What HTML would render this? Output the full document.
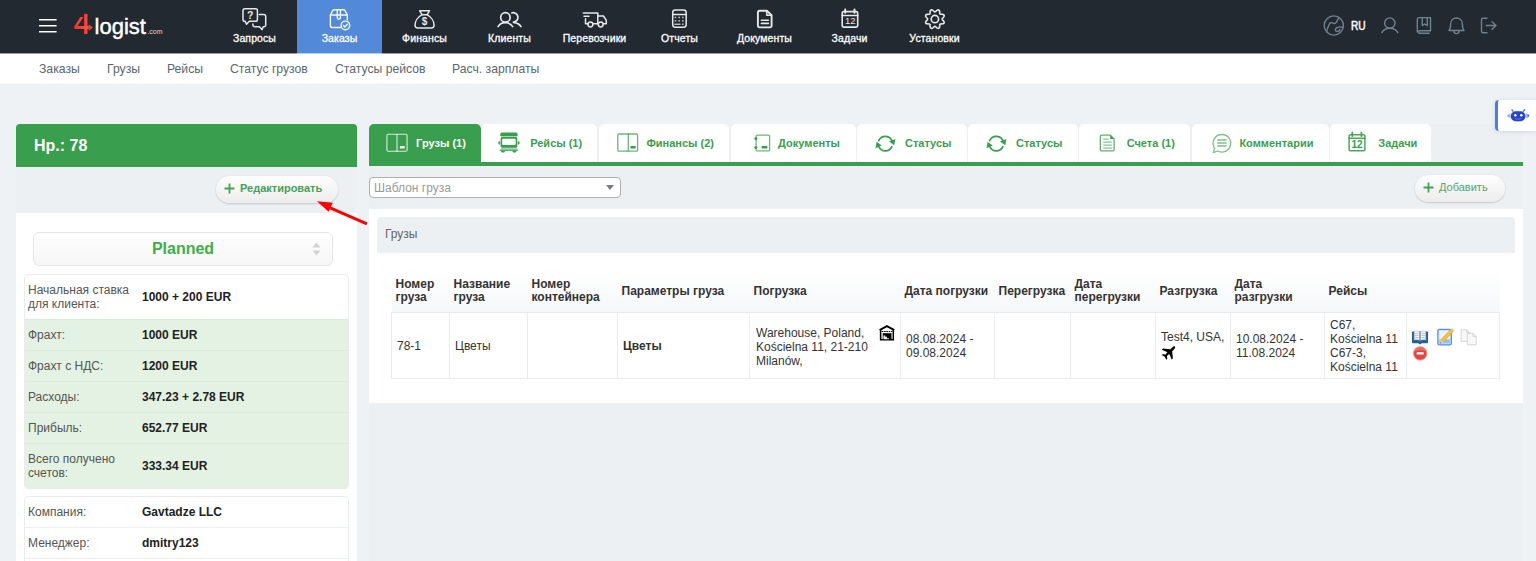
<!DOCTYPE html>
<html lang="ru">
<head>
<meta charset="utf-8">
<title>4logist</title>
<style>
*{box-sizing:border-box;margin:0;padding:0}
html,body{width:1536px;height:561px;overflow:hidden}
body{background:#eef2f5;font-family:"Liberation Sans",sans-serif;font-size:12px;color:#333;position:relative}
.abs{position:absolute}
/* top bar */
#topbar{position:absolute;left:0;top:0;width:1536px;height:53px;background:#232930;box-shadow:0 1px 0 rgba(35,41,48,.45);z-index:2}
#burger{position:absolute;left:38.600px;top:18px;width:18px;height:14.800px;overflow:visible}
#logo{position:absolute;left:74px;top:12px;height:30px;color:#fff;white-space:nowrap}
#logo .l{position:absolute;left:20.600px;top:1.800px;font-size:22px;line-height:26px;-webkit-text-stroke:.45px #fff}
#logo .c{position:absolute;left:73.400px;top:15.800px;font-size:7px;line-height:8px;color:#d8dbdf}
.nav{position:absolute;top:0;left:212px;height:53px;display:flex}
.nav a{display:block;width:85px;height:53px;position:relative;color:#fff;text-decoration:none;text-align:center;font-size:10.500px;letter-spacing:.1px;-webkit-text-stroke:.3px #fff}
.nav a.act{background:#5289d9;box-shadow:0 1px 0 #b4cbee}
.nav a.act svg{stroke:rgba(255,255,255,.92);stroke-width:1.400}
.nav a svg{position:absolute;left:0;top:0;width:85px;height:53px;fill:none;stroke:#e6e8ea;stroke-width:1.500;stroke-linecap:round;stroke-linejoin:round}
.nav a span{position:absolute;left:0;right:0;top:32px;line-height:13px}
.tools{position:absolute;top:0;left:1316px;width:200px;height:53px}
.tools svg{position:absolute;left:0;top:0;width:200px;height:53px;fill:none;stroke:#6e8291;stroke-width:1.400;stroke-linecap:round;stroke-linejoin:round}
.tools b{position:absolute;left:34.500px;top:20px;font-size:12px;line-height:13px;color:#fff;font-weight:normal;-webkit-text-stroke:.45px #fff;display:inline-block;transform:scaleX(.85);transform-origin:0 0}
/* subnav */
#subnav{position:absolute;left:0;top:53px;width:1536px;height:30px;background:#fff;box-shadow:0 1px 0 rgba(255,255,255,.5)}
#subnav a{position:absolute;top:1px;line-height:30px;font-size:12.200px;color:#5b6770;text-decoration:none;white-space:nowrap}
/* robot */
#robot{z-index:3;position:absolute;left:1495px;top:100px;width:41px;height:31px;background:#fff;border-left:3px solid #4a80d4;border-radius:4px 0 0 4px;box-shadow:0 1px 4px rgba(120,140,160,.25)}
#robot svg{position:absolute;left:0;top:0;width:38px;height:31px}
/* left panel */
#lhead{position:absolute;left:16px;top:124px;width:341px;height:43px;background:#399e4d;border-radius:4px 4px 0 0;color:#fff;font-weight:bold;font-size:16px;line-height:43px;padding-left:18px}
.pill{position:absolute;height:27px;border-radius:14px;background:linear-gradient(#fefefe,#ececec);box-shadow:0 1px 2px rgba(0,0,0,.16),0 0 1px rgba(0,0,0,.10);color:#45a157;font-size:11px;line-height:24px;white-space:nowrap}
#lwhite{position:absolute;left:16px;top:213px;width:341px;height:348px;background:#fff}
#status{position:absolute;left:17px;top:19px;width:300px;height:34px;border:1px solid #e4e6e8;border-radius:6px;background:linear-gradient(#fff,#f6f6f6);text-align:center;color:#3cb047;font-weight:bold;font-size:16px;line-height:32px}
.box{position:absolute;left:8px;width:325px;border:1px solid #e9ecee;border-radius:4px;overflow:hidden;background:#fff}
.row{display:flex;align-items:center;border-top:1px solid #eceff1;padding-left:3px;font-size:12px;line-height:14px}
.row:first-child{border-top:0}
.row.g{background:#e3f2e3;border-top-color:#d9ebd9}
.row .k{width:114px;color:#555}
.row .v{font-weight:bold;color:#222}
/* right panel */
.tab{position:absolute;top:124px;height:38px;background:#fff;border-radius:5px 5px 0 0;color:#399e4d;font-weight:bold;font-size:11px;line-height:38px;white-space:nowrap}
.tab.act{background:#399e4d;color:#fff}
.tab svg{position:absolute;left:0;top:0;width:100%;height:38px;fill:none;stroke:#399e4d;stroke-width:1.200;stroke-linejoin:round;stroke-linecap:round}
.tab.act svg{stroke:#fff}
.tab span{position:absolute;top:0}
#tline{position:absolute;left:369px;top:162px;width:1154px;height:4px;background:#399e4d}
#tsel{position:absolute;left:369px;top:177px;width:252px;height:21px;background:#fff;border:1px solid #afafaf;border-radius:4px;font-size:12px;line-height:19px;color:#999;padding:1px 0 0 4px}
#tsel i{position:absolute;right:6px;top:7px;border:4px solid transparent;border-top:5px solid #7a7a7a;border-bottom:0}
#rwhite{position:absolute;left:369px;top:209px;width:1154px;height:194px;background:#fff}
#rhead{position:absolute;left:8px;top:8px;width:1138px;height:36px;background:#ecf0f3;border-radius:4px 4px 0 0;font-size:12px;line-height:35px;color:#666;padding-left:8px}
#ticons{position:absolute;left:0;top:0;width:1154px;height:194px;pointer-events:none}
table{position:absolute;left:22px;top:56px;border-collapse:collapse;table-layout:fixed;width:1108px;font-size:12px}
th{height:47px;text-align:left;font-weight:bold;color:#333;line-height:13px;padding:6px 4px 0 4px;vertical-align:middle;background:linear-gradient(#fff 15%,#f5f7f9)}
td{height:66px;border:1px solid #e9ecef;color:#333;line-height:14px;padding:2px 4px 0 5px;vertical-align:middle}
</style>
</head>
<body>
<!-- TOPBAR -->
<div id="topbar">
  <svg id="burger" viewBox="0 0 18 14"><path d="M0 1.400h17.600M0 7.400h17.600M0 13.400h17.600" stroke="#fff" stroke-width="1.400" fill="none"/></svg>
  <div id="logo">
    <svg class="abs" style="left:0;top:0" width="20" height="24" viewBox="74 12 20 24"><defs><linearGradient id="lg4" x1="0" x2="1" y1="0" y2="0"><stop offset="0" stop-color="#e8332b"/><stop offset="1" stop-color="#fb554b"/></linearGradient></defs><g fill="url(#lg4)"><rect x="84" y="13.900" width="3.400" height="20.100"/><path d="M80.400 17.100H83.500L77.700 25.900H88.800V29.100H74.300V26.300Z"/><path d="M88.600 24.200l4.200 3.300-4.200 3.600z"/></g></svg>
    <span class="l">logist</span><span class="c">.com</span>
  </div>
  <div class="nav">
    <a><svg viewBox="212 0 85 53"><path d="M244.800 8.700h10.800a1.800 1.800 0 0 1 1.800 1.800v8.900a1.800 1.800 0 0 1-1.800 1.800h-6.300l-2.800 3-1.500-3h-0.200a1.800 1.800 0 0 1-1.800-1.800v-8.900a1.800 1.800 0 0 1 1.800-1.800z"/><path d="M259.200 14.600h4.700a1.800 1.800 0 0 1 1.800 1.800v8.500a1.800 1.800 0 0 1-1.800 1.800h-0.700l-1.200 2.900-2.600-2.900h-4.700a1.800 1.800 0 0 1-1.800-1.800v-0.900"/><text x="250.200" y="19.100" font-size="10.500" font-weight="bold" fill="#e6e8ea" stroke="none" text-anchor="middle" font-family="Liberation Sans, sans-serif">?</text></svg><span>Запросы</span></a>
    <a class="act"><svg viewBox="297 0 85 53"><path d="M330.400 15v10.700a1.800 1.800 0 0 0 1.800 1.800h8.300"/><path d="M347.300 19.800v-4.800"/><path d="M330.400 15l2.300-4.300a1.800 1.800 0 0 1 1.500-.9h9.300a1.800 1.800 0 0 1 1.500.9l2.300 4.300z"/><path d="M337.300 9.800v8a1.300 1.300 0 0 0 1.300 1.300h.5a1.300 1.300 0 0 0 1.300-1.300v-8"/><circle cx="345.400" cy="25.400" r="4.300"/><path d="M343.500 25.500l1.400 1.400 2.600-2.600"/></svg><span>Заказы</span></a>
    <a><svg viewBox="382 0 85 53"><path d="M419.700 10.800h9.800l-2.400 3.900h-5z"/><path d="M422.100 14.700c-4.200 2.300-7.100 6.800-7.100 10.600 0 1.700 1 2.700 2.900 2.700h13.300c1.900 0 2.900-1 2.900-2.700 0-3.800-2.900-8.300-7.100-10.600"/><text x="424.600" y="25.300" font-size="10" font-weight="bold" fill="#e6e8ea" stroke="none" text-anchor="middle" font-family="Liberation Sans, sans-serif">$</text></svg><span>Финансы</span></a>
    <a><svg viewBox="467 0 85 53"><g style="stroke-width:1.700"><circle cx="505.400" cy="17.400" r="4.700"/><path d="M498.100 26.600c1.500-2.500 4.200-3.900 7.300-3.900s5.800 1.400 7.300 3.900"/><path d="M511.900 12.900a4.700 4.700 0 1 1 1.500 9.200"/><path d="M514 22.600c3 .2 5.500 1.600 7 4"/></g></svg><span>Клиенты</span></a>
    <a><svg viewBox="552 0 85 53"><path d="M583.300 13h14.500v10.700"/><path d="M584 16.300h5"/><path d="M585.500 18.700v5h2.300"/><path d="M593 23.700h5"/><path d="M597.800 16h5.700l2.800 4.400v3.300h-3"/><circle cx="590.400" cy="24.500" r="2.400"/><circle cx="600.700" cy="24.500" r="2.400"/></svg><span>Перевозчики</span></a>
    <a><svg viewBox="637 0 85 53"><rect x="672.700" y="10" width="13.500" height="17.200" rx="2.600"/><path d="M672.700 14.400h13.500"/><g fill="#c9cdd1" stroke="none"><rect x="674.700" y="16.700" width="1.500" height="1.500"/><rect x="678.400" y="16.700" width="1.500" height="1.500"/><rect x="682.100" y="16.700" width="1.500" height="1.500"/><rect x="674.700" y="20.100" width="1.500" height="1.500"/><rect x="678.400" y="20.100" width="1.500" height="1.500"/><rect x="682.100" y="20.100" width="1.500" height="1.500"/><rect x="674.300" y="23.600" width="6.200" height="1.300"/><rect x="682.100" y="23.500" width="1.500" height="1.500"/></g></svg><span>Отчеты</span></a>
    <a><svg viewBox="722 0 85 53"><g style="stroke-width:1.900"><path d="M759.600 10.800h7.300l4.700 4.400v10.500a1.700 1.700 0 0 1-1.700 1.700h-10.300a1.700 1.700 0 0 1-1.700-1.700v-13.200a1.700 1.700 0 0 1 1.700-1.700z"/><path d="M766.700 11v4.300h4.600" style="stroke-width:1.500"/><path d="M761.400 20.200h7M761.400 23.400h7" style="stroke-width:1.600"/></g></svg><span>Документы</span></a>
    <a><svg viewBox="807 0 85 53"><g style="stroke-width:1.600"><rect x="842.200" y="11.600" width="15.500" height="15.500" rx="1.500"/><path d="M842.200 15.500h15.500"/><path d="M845.200 9.400v3.400M854.500 9.400v3.400" style="stroke-width:2"/></g><text x="850.300" y="24.300" font-size="9.500" fill="#e6e8ea" stroke="none" text-anchor="middle" font-family="Liberation Sans, sans-serif">12</text></svg><span>Задачи</span></a>
    <a><svg viewBox="892 0 85 53"><g style="stroke-width:1.600"><path d="M942.15 19.10 L942.21 19.39 L942.38 19.69 L942.65 20.02 L942.98 20.38 L943.33 20.78 L943.67 21.21 L943.94 21.65 L944.12 22.10 L944.17 22.52 L944.09 22.91 L943.88 23.24 L943.54 23.50 L943.10 23.69 L942.59 23.81 L942.05 23.88 L941.52 23.91 L941.03 23.93 L940.61 23.98 L940.27 24.07 L940.03 24.23 L939.87 24.47 L939.78 24.81 L939.73 25.23 L939.71 25.72 L939.68 26.25 L939.61 26.79 L939.49 27.30 L939.30 27.74 L939.04 28.08 L938.71 28.29 L938.32 28.37 L937.90 28.32 L937.45 28.14 L937.01 27.87 L936.58 27.53 L936.18 27.18 L935.82 26.85 L935.49 26.58 L935.19 26.41 L934.90 26.35 L934.61 26.41 L934.31 26.58 L933.98 26.85 L933.62 27.18 L933.22 27.53 L932.79 27.87 L932.35 28.14 L931.90 28.32 L931.48 28.37 L931.09 28.29 L930.76 28.08 L930.50 27.74 L930.31 27.30 L930.19 26.79 L930.12 26.25 L930.09 25.72 L930.07 25.23 L930.02 24.81 L929.93 24.47 L929.77 24.23 L929.53 24.07 L929.19 23.98 L928.77 23.93 L928.28 23.91 L927.75 23.88 L927.21 23.81 L926.70 23.69 L926.26 23.50 L925.92 23.24 L925.71 22.91 L925.63 22.52 L925.68 22.10 L925.86 21.65 L926.13 21.21 L926.47 20.78 L926.82 20.38 L927.15 20.02 L927.42 19.69 L927.59 19.39 L927.65 19.10 L927.59 18.81 L927.42 18.51 L927.15 18.18 L926.82 17.82 L926.47 17.42 L926.13 16.99 L925.86 16.55 L925.68 16.10 L925.63 15.68 L925.71 15.29 L925.92 14.96 L926.26 14.70 L926.70 14.51 L927.21 14.39 L927.75 14.32 L928.28 14.29 L928.77 14.27 L929.19 14.22 L929.53 14.13 L929.77 13.97 L929.93 13.73 L930.02 13.39 L930.07 12.97 L930.09 12.48 L930.12 11.95 L930.19 11.41 L930.31 10.90 L930.50 10.46 L930.76 10.12 L931.09 9.91 L931.48 9.83 L931.90 9.88 L932.35 10.06 L932.79 10.33 L933.22 10.67 L933.62 11.02 L933.98 11.35 L934.31 11.62 L934.61 11.79 L934.90 11.85 L935.19 11.79 L935.49 11.62 L935.82 11.35 L936.18 11.02 L936.58 10.67 L937.01 10.33 L937.45 10.06 L937.90 9.88 L938.32 9.83 L938.71 9.91 L939.04 10.12 L939.30 10.46 L939.49 10.90 L939.61 11.41 L939.68 11.95 L939.71 12.48 L939.73 12.97 L939.78 13.39 L939.87 13.73 L940.03 13.97 L940.27 14.13 L940.61 14.22 L941.03 14.27 L941.52 14.29 L942.05 14.32 L942.59 14.39 L943.10 14.51 L943.54 14.70 L943.88 14.96 L944.09 15.29 L944.17 15.68 L944.12 16.10 L943.94 16.55 L943.67 16.99 L943.33 17.42 L942.98 17.82 L942.65 18.18 L942.38 18.51 L942.21 18.81Z"/><circle cx="934.900" cy="19.100" r="3.700"/></g></svg><span>Установки</span></a>
  </div>
  <div class="tools">
    <svg viewBox="1316 0 200 53"><circle cx="1333.800" cy="25.500" r="9.600"/><path d="M1326.800 31.500c.3-2.500 .8-4 1.600-5.200s.6-2.600 1.800-3.400 2.600.3 4 .6 1.700-.6 2.400-1.700.8-2.400 2.300-3.800"/><path d="M1343 27.600c-1.700-.8-4.500-.8-6.400.3s-1.700 3.300.3 3.500 3.400-.8 2.800-2"/>
    <circle cx="1389.800" cy="23.100" r="5.200"/><path d="M1381.800 32.700c1.500-2.800 4.500-4.400 8-4.400s6.500 1.600 8 4.400"/>
    <path d="M1430.500 30.800h-11.400a1.800 1.800 0 0 0 0 2.500h10.100"/><path d="M1417.300 32v-12.600a1.800 1.800 0 0 1 1.800-1.800h11.400v13.200"/><path d="M1422.200 17.600v8l2.550-1.600 2.550 1.600v-8"/>
    <path d="M1449 30.500c1.400-1.500 1.600-3.500 1.600-6.300 0-3.600 2.500-6.200 5.900-6.200s5.900 2.600 5.900 6.200c0 2.800.2 4.800 1.600 6.300z"/><path d="M1453.900 31a2.600 2.600 0 0 0 5.200 0"/>
    <path d="M1487 18.300h-4a1.500 1.500 0 0 0-1.500 1.500v11.400a1.500 1.500 0 0 0 1.500 1.500h4"/><path d="M1486.300 25.500h9.700M1492 21.800l4 3.700-4 3.700"/></svg>
    <b>RU</b>
  </div>
</div>
<!-- SUBNAV -->
<div id="subnav">
  <a style="left:39px">Заказы</a><a style="left:107px">Грузы</a><a style="left:167px">Рейсы</a><a style="left:230px">Статус грузов</a><a style="left:335px">Статусы рейсов</a><a style="left:452px">Расч. зарплаты</a>
</div>
<div id="robot"><svg viewBox="1498 100 38 31"><path d="M1512 109.900l1.600 2.200M1524.600 109.700l-1.700 2.400" stroke="#4a6ad8" stroke-width="1.400" fill="none" stroke-linecap="round"/><path d="M1510.600 113.200l-3.300 1.700v1.800l3.300 1.500z" fill="#a3b6ee"/><path d="M1525.700 113.200c2.400.2 3.400 1.200 3.400 2.500s-1 2.300-3.400 2.500z" fill="#a3b6ee"/><circle cx="1528.400" cy="115.700" r=".9" fill="#3d5fd6"/><rect x="1510.200" y="110.700" width="15.800" height="11.200" rx="5.600" fill="#dfe8fb"/><rect x="1510.800" y="111.200" width="14.600" height="10.100" rx="5" fill="#2746c4"/><circle cx="1515.300" cy="115.300" r="1.250" fill="#fff"/><circle cx="1521.300" cy="115.300" r="1.250" fill="#fff"/><path d="M1515.200 118.400c1.800 1 4 1 5.800 0" stroke="#6f8be6" stroke-width=".8" fill="none"/></svg></div>

<!-- LEFT PANEL -->
<div class="abs" style="left:16px;top:167px;width:341px;height:46px;background:#ecf0f3"></div>
<div class="abs" style="left:369px;top:124px;width:1154px;height:437px;background:#ecf0f3"></div>
<div id="lhead">Нр.: 78</div>
<div class="pill" style="left:216px;top:176px;width:122px;font-weight:bold;padding-left:24px">
  <svg class="abs" style="left:8px;top:7px" width="11" height="11" viewBox="0 0 11 11"><path d="M5.500 0.500v10M0.500 5.500h10" stroke="#45a157" stroke-width="1.800" fill="none"/></svg>Редактировать</div>
<svg class="abs" style="left:310px;top:195px;z-index:5" width="62" height="34" viewBox="310 195 62 34"><path d="M329 207.400L366.900 223.800" stroke="#ff0000" stroke-width="2.900" fill="none"/><path d="M316.900 201.300L332.800 202.800L328.600 211.800Z" fill="#ff0000"/></svg>
<div id="lwhite">
  <div id="status">Planned<svg class="abs" style="right:11px;top:9px" width="9" height="14" viewBox="0 0 9 14"><path d="M4.500 0.500l4 5h-8zM4.500 13.500l4-5h-8z" fill="#d2d2d2"/></svg></div>
  <div class="box" style="top:61px">
    <div class="row" style="height:44px"><span class="k">Начальная ставка для клиента:</span><span class="v">1000 + 200 EUR</span></div>
    <div class="row g" style="height:31px"><span class="k">Фрахт:</span><span class="v">1000 EUR</span></div>
    <div class="row g" style="height:31px"><span class="k">Фрахт с НДС:</span><span class="v">1200 EUR</span></div>
    <div class="row g" style="height:31px"><span class="k">Расходы:</span><span class="v">347.23 + 2.78 EUR</span></div>
    <div class="row g" style="height:31px"><span class="k">Прибыль:</span><span class="v">652.77 EUR</span></div>
    <div class="row g" style="height:45px"><span class="k">Всего получено счетов:</span><span class="v">333.34 EUR</span></div>
  </div>
  <div class="box" style="top:283px;height:80px;border-radius:4px 4px 0 0">
    <div class="row" style="height:30px"><span class="k">Компания:</span><span class="v">Gavtadze LLC</span></div>
    <div class="row" style="height:31px"><span class="k">Менеджер:</span><span class="v">dmitry123</span></div>
    <div class="row" style="height:31px"><span class="k"></span><span class="v"></span></div>
  </div>
</div>

<!-- RIGHT PANEL -->
<div class="tab act" style="left:369px;width:112px"><svg viewBox="369 124 112 38"><g style="stroke-width:1.100;stroke-opacity:.8"><rect x="386.900" y="134.200" width="20.200" height="17" rx="1.200"/><path d="M397 134.200v17"/></g><rect x="399.900" y="146.100" width="4.800" height="2.400" fill="#fff" stroke="none"/></svg><span style="left:47.1px">Грузы (1)</span></div>
<div class="tab" style="left:481px;width:116px"><svg viewBox="481 124 116 38"><g fill="#399e4d" stroke="none"><path d="M500.300 136.300v-2.400a1.500 1.500 0 0 1 1.500-1.500h14.300a1.500 1.500 0 0 1 1.500 1.500v2.400z"/><path d="M502.300 136.800h13.300a1.700 1.700 0 0 1 1.700 1.700v7.600a1.700 1.700 0 0 1-1.700 1.700h-13.300a1.700 1.700 0 0 1-1.700-1.700v-7.600a1.700 1.700 0 0 1 1.700-1.700zM503.200 138.800a1 1 0 0 0-1 1v4.100a1 1 0 0 0 1 1h11.500a1 1 0 0 0 1-1v-4.100a1 1 0 0 0-1-1z" fill-rule="evenodd"/><path d="M498.400 141.600h1.700v3h-.7a1 1 0 0 1-1-1zM517.800 141.600h1.700v2a1 1 0 0 1-1 1h-.7z"/><rect x="500.800" y="147.800" width="16.300" height="1.800" fill-opacity=".45"/><rect x="499.600" y="149.600" width="18.400" height="1.200"/><path d="M500.600 150.700h4.800l-1.200 1.900h-2.400zM512 150.700h4.800l-1.200 1.900h-2.400z"/></g></svg><span style="left:49.2px">Рейсы (1)</span></div>
<div class="tab" style="left:599px;width:130px"><svg viewBox="599 124 130 38"><g style="stroke-width:1.300;stroke-opacity:.75"><rect x="617.800" y="134" width="19.800" height="17.100" rx="1.200"/><path d="M628.300 134v17.100"/></g><rect x="630.500" y="146.100" width="5.200" height="2.400" rx=".5" fill="#399e4d" stroke="none"/></svg><span style="left:47.4px">Финансы (2)</span></div>
<div class="tab" style="left:731px;width:125px"><svg viewBox="731 124 125 38"><g style="stroke-width:1.300;stroke-opacity:.75"><rect x="756.100" y="135.100" width="13.500" height="15.800" rx="1.200"/></g><circle cx="755.800" cy="138.500" r="1.500" fill="#399e4d" stroke="none"/><circle cx="755.800" cy="147.500" r="1.500" fill="#399e4d" stroke="none"/><rect x="761.600" y="146.100" width="5.800" height="2.400" rx=".5" fill="#399e4d" stroke="none"/></svg><span style="left:47.1px">Документы</span></div>
<div class="tab" style="left:857px;width:110px"><svg viewBox="857 124 110 38"><g style="stroke-width:1.700"><path d="M878.7 140.6 A7.200 7.200 0 0 1 892.2 141.6"/><path d="M891.9 146.6 A7.200 7.200 0 0 1 878.9 146.8"/></g><path d="M889.0 141.6 L895.4 139.0 L894.2 145.2 Z" fill="#399e4d" stroke="none"/><path d="M876.6 141.8 L881.7 145.4 L875.5 148.3 Z" fill="#399e4d" stroke="none"/></svg><span style="left:48.0px">Статусы</span></div>
<div class="tab" style="left:968px;width:110px"><svg viewBox="968 124 110 38"><g style="stroke-width:1.700"><path d="M989.7 140.6 A7.200 7.200 0 0 1 1003.2 141.6"/><path d="M1002.9 146.6 A7.200 7.200 0 0 1 989.9 146.8"/></g><path d="M1000.0 141.6 L1006.4 139.0 L1005.2 145.2 Z" fill="#399e4d" stroke="none"/><path d="M987.6 141.8 L992.7 145.4 L986.5 148.3 Z" fill="#399e4d" stroke="none"/></svg><span style="left:48.0px">Статусы</span></div>
<div class="tab" style="left:1079px;width:111px"><svg viewBox="1079 124 111 38"><g style="stroke-width:1.300;stroke-opacity:.8"><path d="M1101.500 135.100h8.900l3.700 3.800v10.800a1.200 1.200 0 0 1-1.200 1.200h-11.400a1.200 1.200 0 0 1-1.200-1.200v-13.400a1.200 1.200 0 0 1 1.200-1.200z"/></g><path d="M1110.200 135v4.100h4z" fill="#399e4d" stroke="none"/><g style="stroke-width:1.300;stroke-opacity:.6;stroke-linecap:butt"><path d="M1103.200 139.200h5.400M1103.200 142.100h8.600M1103.200 145.100h8.600M1103.200 148.100h8.600"/></g></svg><span style="left:47.7px">Счета (1)</span></div>
<div class="tab" style="left:1192px;width:137px"><svg viewBox="1192 124 137 38"><g style="stroke-width:1.300;stroke-opacity:.65"><path d="M1222 134.500a8.800 8.800 0 1 1-4.300 16.500l-4.500 1.600 1.500-4.300a8.800 8.800 0 0 1 7.300-13.800z"/></g><g style="stroke-width:1.500;stroke-opacity:.65;stroke-linecap:butt"><path d="M1217.200 139.900h9.400M1217.200 143h9.400M1217.200 146.100h9.400"/></g></svg><span style="left:47.4px">Комментарии</span></div>
<div class="tab" style="left:1330px;width:101px"><svg viewBox="1330 124 101 38"><g style="stroke-width:1.500;stroke-opacity:.9"><rect x="1349.100" y="134.800" width="15.800" height="16" rx="1.300"/><path d="M1349.100 138.300h15.800"/><path d="M1352.300 132.400v3.800M1361.400 132.400v3.800" style="stroke-width:1.800"/></g><text x="1357.100" y="148.100" font-size="10" fill="#399e4d" stroke="none" text-anchor="middle" font-family="Liberation Sans, sans-serif">12</text></svg><span style="left:48.3px">Задачи</span></div>
<div id="tline"></div>
<div id="tsel">Шаблон груза<i></i></div>
<div class="pill" style="left:1415px;top:175px;width:90px;padding-left:24px;font-size:11px;color:#55a565">
  <svg class="abs" style="left:8px;top:7px" width="11" height="11" viewBox="0 0 11 11"><path d="M5.500 0.500v10M0.500 5.500h10" stroke="#45a157" stroke-width="1.800" fill="none"/></svg>Добавить</div>
<div id="rwhite">
  <div id="rhead">Грузы</div>
  <table>
    <colgroup><col style="width:58px"><col style="width:78px"><col style="width:90px"><col style="width:132px"><col style="width:151px"><col style="width:94px"><col style="width:76px"><col style="width:85px"><col style="width:75px"><col style="width:94px"><col style="width:82px"><col style="width:93px"></colgroup>
    <tr><th>Номер груза</th><th>Название груза</th><th>Номер контейнера</th><th>Параметры груза</th><th>Погрузка</th><th>Дата погрузки</th><th>Перегрузка</th><th>Дата перегрузки</th><th>Разгрузка</th><th>Дата разгрузки</th><th>Рейсы</th><th></th></tr>
    <tr><td>78-1</td><td>Цветы</td><td></td><td><b>Цветы</b></td><td style="padding:4px 22px 0 6px">Warehouse, Poland, Kościelna 11, 21-210 Milanów,</td><td>08.08.2024 - 09.08.2024</td><td></td><td></td><td style="padding-top:0;padding-bottom:2px">Test4, USA,<br>&nbsp;</td><td>10.08.2024 - 11.08.2024</td><td>C67, Kościelna 11 C67-3, Kościelna 11</td><td></td></tr>
  </table>
  <svg id="ticons" viewBox="369 209 1154 194">
    <!-- warehouse -->
    <g fill="none" stroke="#000"><path d="M879.600 330.200L886.900 326.200L894.300 330.200" stroke-width="1.900" stroke-linejoin="miter"/><path d="M880.600 330v9.800h12.700V330" stroke-width="1.500"/><path d="M881.800 331.500h10.400" stroke-width="1.100" stroke-dasharray="1.600 0.700"/><path d="M881.900 333v6M892.100 333v6" stroke="#8a8a8a" stroke-width=".9"/></g>
    <rect x="882.900" y="333.200" width="8.500" height="6" fill="#000"/><path d="M883.400 339.200v-3.700h1.900v1.300h1.700v1.400h2v1z" fill="#e8e8e8"/>
    <!-- plane -->
    <path transform="translate(1169.600 351.900) rotate(45)" d="M0 -7.600C.9 -7.600 1.300 -6 1.300 -4.500L1.300 -2.300L7 2.300L7 3.900L1.300 1.800L1.100 4.800L3.300 6.600L3.300 7.800L0 6.900L-3.300 7.800L-3.300 6.600L-1.100 4.800L-1.300 1.800L-7 3.900L-7 2.300L-1.300 -2.300L-1.300 -4.500C-1.300 -6 -.9 -7.600 0 -7.600Z" fill="#000"/>
    <!-- open book -->
    <path d="M1412 332.600a1 1 0 0 1 1-1h14a1 1 0 0 1 1 1v9.700a1 1 0 0 1-1 1h-5.200l-1.800 1.100l-1.800-1.100h-5.200a1 1 0 0 1-1-1z" fill="#255d9f"/>
    <path d="M1414.200 331.400c2-.8 4-.6 5.300.4v8.800c-1.300-1-3.300-1.200-5.300-.4z" fill="#f4f6f8" stroke="#9aa9bb" stroke-width=".4"/><path d="M1425.800 331.400c-2-.8-4-.6-5.300.4v8.800c1.300-1 3.300-1.200 5.300-.4z" fill="#f4f6f8" stroke="#9aa9bb" stroke-width=".4"/>
    <path d="M1414.600 333.500h3.800M1414.600 335.500h3.800M1414.600 337.500h3.800M1421.600 333.500h3.800M1421.600 335.500h3.800M1421.600 337.500h3.800" stroke="#aab2bc" stroke-width=".7"/>
    <!-- edit -->
    <rect x="1437.800" y="329.400" width="13.600" height="15.400" rx="1.600" fill="#c5dcf7" stroke="#5b8fd8" stroke-width="1.200"/><rect x="1439.400" y="331" width="10.400" height="8.500" fill="#e9f2fd"/><rect x="1439.400" y="339.500" width="10.400" height="3.700" fill="#8fc1f3"/>
    <path d="M1450.300 329.800l2.500 2.300l-9.300 9.800l-2.500-2.300z" fill="#f4c13a" stroke="#d99a1f" stroke-width=".5"/><path d="M1441 339.600l2.500 2.300l-3.600 1.300z" fill="#ecd2ae"/><path d="M1440.500 342.200l.9.800l-1.500.5z" fill="#444"/><path d="M1450.300 329.800l1-1a.9.900 0 0 1 1.300 0l1.200 1.100a.9.900 0 0 1 0 1.300l-1 1z" fill="#f0b3a8"/>
    <!-- copy (disabled) -->
    <g fill="#f8f8f8" stroke="#d3d3d3" stroke-width=".9" stroke-linejoin="round"><path d="M1461.200 329.800h5.600l3 3v8.600h-8.600z"/><path d="M1466.800 329.800v3h3" fill="none"/><path d="M1467.400 333.200h5.600l3.200 3.200v8.400h-8.800z"/><path d="M1473 333.200v3.200h3.200" fill="none"/></g>
    <!-- delete -->
    <circle cx="1420.200" cy="353.400" r="6.700" fill="#e2463f" stroke="#ef8f89" stroke-width=".9"/><path d="M1414.500 351.500a6 6 0 0 1 11.400 0a9 5 0 0 0-11.400 0z" fill="#f07a73" opacity=".7"/><rect x="1416.600" y="352.300" width="7.200" height="2.300" rx=".6" fill="#fff"/>
  </svg>
</div>
</body>
</html>
